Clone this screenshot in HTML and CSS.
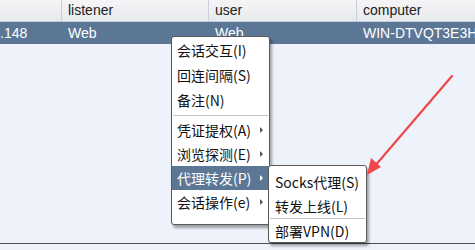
FILE: index.html
```html
<!DOCTYPE html>
<html>
<head>
<meta charset="utf-8">
<link rel="stylesheet" href="styles.css">
</head>
<body>
<div class="screen">
  <div class="table">
    <div class="hdr">
      <div class="hc c0"></div>
      <div class="hc c1">listener</div>
      <div class="hc c2">user</div>
      <div class="hc c3">computer</div>
    </div>
    <div class="row sel">
      <div class="cell c0 first">.148</div>
      <div class="cell c1">Web</div>
      <div class="cell c2">Web</div>
      <div class="cell c3">WIN-DTVQT3E3H4</div>
    </div>
    <div class="fill"></div>
    <div class="bottom"></div>
  </div>

  <div class="menu main">
    <div class="item">会话交互(I)</div>
    <div class="item">回连间隔(S)</div>
    <div class="item">备注(N)</div>
    <div class="sep"></div>
    <div class="item sub">凭证提权(A)<span class="tri"></span></div>
    <div class="item sub">浏览探测(E)<span class="tri"></span></div>
    <div class="item sub active">代理转发(P)<span class="tri"></span></div>
    <div class="item sub">会话操作(e)<span class="tri"></span></div>
  </div>

  <div class="menu second">
    <div class="item">Socks代理(S)</div>
    <div class="item">转发上线(L)</div>
    <div class="sep"></div>
    <div class="item last">部署VPN(D)</div>
  </div>

  <svg class="arrow" width="475" height="250" viewBox="0 0 475 250">
    <line x1="452" y1="76" x2="374" y2="167" stroke="#f0484a" stroke-width="2.2" stroke-linecap="round"/>
    <polygon points="367,175 371,158 381,167" fill="#f0484a"/>
  </svg>
</div>
</body>
</html>
```

FILE: styles.css
```css
* { box-sizing: border-box; }
html, body { margin: 0; padding: 0; }
body {
  width: 475px;
  height: 250px;
  overflow: hidden;
  background: #eef2fa;
  font-family: "Liberation Sans", Arial, "Noto Sans CJK SC", sans-serif;
  font-size: 14px;
  color: #1a1a1a;
}
.screen {
  position: relative;
  width: 475px;
  height: 250px;
  overflow: hidden;
}
.table {
  display: flex;
  flex-direction: column;
  height: 250px;
}
.hdr, .row {
  display: grid;
  grid-template-columns: 62px 147px 148px 1fr;
}
.hdr {
  height: 22px;
  background: linear-gradient(#f5f5f7, #e9eaee);
  border-bottom: 1px solid #c3ccdb;
}
.hc {
  border-right: 1px solid #c9ced8;
  padding-left: 6px;
  line-height: 21px;
  color: #202020;
  white-space: nowrap;
}
.hc.c3 { border-right: none; }
.row {
  height: 22px;
  line-height: 22px;
}
.row.sel {
  background: #5c7796;
  color: #ffffff;
}
.cell {
  padding-left: 6px;
  white-space: nowrap;
  overflow: hidden;
}
.cell.first { padding-left: 0; }
.cell.c3 { overflow: visible; }
.fill { flex: 1; }
.bottom {
  height: 7px;
  border-top: 1px solid #4e5054;
}

.menu {
  position: absolute;
  background: #ffffff;
  border: 1px solid #5a5a5a;
  border-radius: 3px;
  box-shadow: 2px 3px 3px rgba(0,0,0,0.35);
  font-family: "Noto Sans CJK SC", "Liberation Sans", sans-serif;
  font-size: 14px;
  color: #111;
}
.menu.main {
  left: 171px;
  top: 36px;
  width: 99px;
  padding: 1px 0 10px;
}
.menu.second {
  left: 268px;
  top: 165px;
  width: 99px;
  padding: 4px 0 0;
}
.item {
  position: relative;
  height: 24px;
  line-height: 24px;
  padding-left: 5px;
  white-space: nowrap;
}
.main .item:nth-child(-n+3) { height: 25px; line-height: 25px; }
.second .item { padding-left: 6px; }
.second .item.last { height: 22px; line-height: 22px; }
.item.active {
  background: #5c7796;
  color: #fff;
}
.sep {
  height: 1px;
  background: #c4c4c4;
  margin: 2px 1px 2px 1px;
}
.second .sep { margin: 0 1px 1px 1px; }
.tri {
  position: absolute;
  right: 6px;
  top: 9px;
  width: 0;
  height: 0;
  border-top: 3px solid transparent;
  border-bottom: 3px solid transparent;
  border-left: 3px solid #555;
}
.item.active .tri { border-left-color: #fff; }
.arrow {
  position: absolute;
  left: 0;
  top: 0;
  pointer-events: none;
}
```
